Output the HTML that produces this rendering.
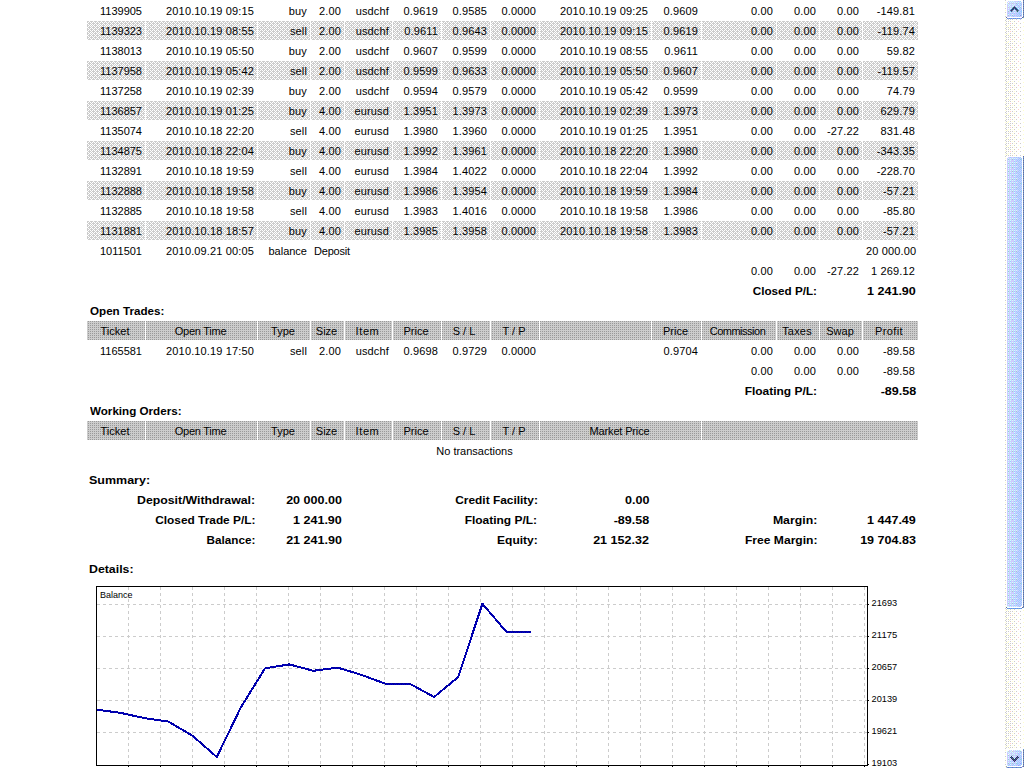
<!DOCTYPE html>
<html lang="en">
<head>
<meta charset="utf-8">
<title>Statement</title>
<style>
html,body{margin:0;padding:0;background:#fff;width:1024px;height:768px;overflow:hidden}
body{position:relative;font-family:"Liberation Sans",Arial,sans-serif;font-size:11px;color:#000}
#bg{position:absolute;left:0;top:0;width:1024px;height:768px}
table{position:absolute;left:86px;top:0;width:833px;border-collapse:separate;border-spacing:1px;table-layout:fixed}
td{padding:4px 3px 2px 3px;height:13px;line-height:13px;font-size:11px;text-align:right;white-space:nowrap;letter-spacing:.15px;overflow:visible;vertical-align:top}
td.l{text-align:left}
td.c,tr.hd td{text-align:center}
td.c{letter-spacing:0}
tr.hd td{letter-spacing:0;padding-right:5px}
td.sp{height:8px;padding:0;line-height:8px;font-size:1px}
td.g{padding:3px 0 0 0;height:auto;line-height:0}
b{font-weight:bold}
b.n{display:inline-block;transform:translateX(1px) scaleX(1.14);transform-origin:100% 50%;letter-spacing:0}
b.w,b.wl{display:inline-block;transform:translateX(1.5px) scaleX(1.095);transform-origin:100% 50%;letter-spacing:0}
b.wl{transform:scaleX(1.057);transform-origin:0 50%}
td.d{letter-spacing:.14px}
td.t{letter-spacing:0}
.chart{display:inline-block;vertical-align:top}
.ct{font-family:"Liberation Sans",Arial,sans-serif;font-size:9.8px;fill:#000}
</style>
</head>
<body>
<svg id="bg" width="1024" height="768" viewBox="0 0 1024 768" shape-rendering="crispEdges">
<defs>
<pattern id="e0" width="8" height="8" patternUnits="userSpaceOnUse"><rect width="8" height="8" fill="#fff"/><path d="M1 0h1v1h-1zM3 0h1v1h-1zM5 0h1v1h-1zM7 0h1v1h-1zM0 1h1v1h-1zM2 1h1v1h-1zM4 1h1v1h-1zM6 1h2v1h-2zM1 2h1v1h-1zM3 2h1v1h-1zM5 2h1v1h-1zM7 2h1v1h-1zM0 3h3v1h-3zM4 3h3v1h-3zM1 4h1v1h-1zM3 4h1v1h-1zM5 4h1v1h-1zM7 4h1v1h-1zM0 5h1v1h-1zM2 5h3v1h-3zM6 5h2v1h-2zM1 6h1v1h-1zM3 6h1v1h-1zM5 6h1v1h-1zM7 6h1v1h-1zM0 7h3v1h-3zM4 7h3v1h-3z" fill="#ccc"/></pattern>
<pattern id="c0" width="2" height="2" patternUnits="userSpaceOnUse"><rect width="2" height="2" fill="#ccc"/><rect x="0" y="1" width="1" height="1" fill="#999"/></pattern>
<pattern id="trk" x="1005" y="0" width="19" height="8" patternUnits="userSpaceOnUse"><rect width="19" height="8" fill="#fff"/><path fill="#ccc" d="M0 0h1v1h-1zM1 1h1v1h-1zM5 1h1v1h-1zM9 1h1v1h-1zM1 3h1v1h-1zM3 3h1v1h-1zM5 3h1v1h-1zM7 3h1v1h-1zM11 3h1v1h-1zM15 3h1v1h-1zM0 4h1v1h-1zM1 5h1v1h-1zM3 5h1v1h-1zM5 5h1v1h-1zM9 5h1v1h-1zM1 7h1v1h-1zM3 7h1v1h-1zM7 7h1v1h-1zM11 7h1v1h-1zM15 7h1v1h-1z"/><path fill="#ffc" d="M3 1h1v1h-1zM7 1h1v1h-1zM13 1h1v1h-1zM0 2h1v1h-1zM2 2h1v1h-1zM18 2h1v1h-1zM9 3h1v1h-1zM4 4h1v1h-1zM7 5h1v1h-1zM0 6h1v1h-1zM18 6h1v1h-1zM9 7h1v1h-1z"/><path fill="#fcc" d="M13 5h1v1h-1zM5 7h1v1h-1z"/></pattern><pattern id="thm" x="1005" y="0" width="19" height="8" patternUnits="userSpaceOnUse"><rect width="19" height="8" fill="#ccf"/><path fill="#ccc" d="M0 0h1v1h-1zM0 4h1v1h-1z"/><path fill="#fff" d="M1 0h1v1h-1zM17 0h1v1h-1zM0 1h2v1h-2zM17 1h1v1h-1zM1 2h1v1h-1zM17 2h1v1h-1zM0 3h2v1h-2zM17 3h1v1h-1zM1 4h1v1h-1zM17 4h1v1h-1zM0 5h2v1h-2zM17 5h1v1h-1zM1 6h1v1h-1zM17 6h1v1h-1zM0 7h2v1h-2zM17 7h1v1h-1z"/><path fill="#cff" d="M3 0h1v1h-1zM5 0h1v1h-1zM9 0h1v1h-1zM3 2h1v1h-1zM5 2h1v1h-1zM7 2h1v1h-1zM9 2h1v1h-1zM11 2h1v1h-1zM3 4h1v1h-1zM5 4h1v1h-1zM7 4h1v1h-1zM9 4h1v1h-1zM3 6h1v1h-1zM5 6h1v1h-1zM7 6h1v1h-1zM9 6h1v1h-1zM11 6h1v1h-1z"/><path fill="#9cf" d="M12 0h1v1h-1zM14 0h1v1h-1zM16 0h1v1h-1zM9 1h1v1h-1zM11 1h1v1h-1zM13 1h1v1h-1zM15 1h1v1h-1zM14 2h1v1h-1zM16 2h1v1h-1zM9 3h1v1h-1zM13 3h1v1h-1zM15 3h1v1h-1zM12 4h1v1h-1zM14 4h1v1h-1zM16 4h1v1h-1zM5 5h1v1h-1zM9 5h1v1h-1zM11 5h1v1h-1zM13 5h1v1h-1zM15 5h1v1h-1zM14 6h1v1h-1zM16 6h1v1h-1zM9 7h1v1h-1zM11 7h1v1h-1zM13 7h1v1h-1zM16 7h1v1h-1z"/><path fill="#669" d="M18 0h1v1h-1zM18 2h1v1h-1zM18 4h1v1h-1zM18 6h1v1h-1z"/><path fill="#69c" d="M18 1h1v1h-1zM18 3h1v1h-1zM18 5h1v1h-1zM18 7h1v1h-1z"/><path fill="#ffc" d="M0 2h1v1h-1zM0 6h1v1h-1z"/><path fill="#9cc" d="M3 3h1v1h-1zM7 3h1v1h-1zM11 3h1v1h-1zM3 7h1v1h-1zM7 7h1v1h-1zM15 7h1v1h-1z"/></pattern>
</defs>
<rect x="87" y="21" width="58" height="19" fill="url(#e0)"/>
<rect x="146" y="21" width="111" height="19" fill="url(#e0)"/>
<rect x="258" y="21" width="52" height="19" fill="url(#e0)"/>
<rect x="311" y="21" width="33" height="19" fill="url(#e0)"/>
<rect x="345" y="21" width="47" height="19" fill="url(#e0)"/>
<rect x="393" y="21" width="48" height="19" fill="url(#e0)"/>
<rect x="442" y="21" width="48" height="19" fill="url(#e0)"/>
<rect x="491" y="21" width="48" height="19" fill="url(#e0)"/>
<rect x="540" y="21" width="111" height="19" fill="url(#e0)"/>
<rect x="652" y="21" width="49" height="19" fill="url(#e0)"/>
<rect x="702" y="21" width="74" height="19" fill="url(#e0)"/>
<rect x="777" y="21" width="42" height="19" fill="url(#e0)"/>
<rect x="820" y="21" width="42" height="19" fill="url(#e0)"/>
<rect x="863" y="21" width="55" height="19" fill="url(#e0)"/>
<rect x="87" y="61" width="58" height="19" fill="url(#e0)"/>
<rect x="146" y="61" width="111" height="19" fill="url(#e0)"/>
<rect x="258" y="61" width="52" height="19" fill="url(#e0)"/>
<rect x="311" y="61" width="33" height="19" fill="url(#e0)"/>
<rect x="345" y="61" width="47" height="19" fill="url(#e0)"/>
<rect x="393" y="61" width="48" height="19" fill="url(#e0)"/>
<rect x="442" y="61" width="48" height="19" fill="url(#e0)"/>
<rect x="491" y="61" width="48" height="19" fill="url(#e0)"/>
<rect x="540" y="61" width="111" height="19" fill="url(#e0)"/>
<rect x="652" y="61" width="49" height="19" fill="url(#e0)"/>
<rect x="702" y="61" width="74" height="19" fill="url(#e0)"/>
<rect x="777" y="61" width="42" height="19" fill="url(#e0)"/>
<rect x="820" y="61" width="42" height="19" fill="url(#e0)"/>
<rect x="863" y="61" width="55" height="19" fill="url(#e0)"/>
<rect x="87" y="101" width="58" height="19" fill="url(#e0)"/>
<rect x="146" y="101" width="111" height="19" fill="url(#e0)"/>
<rect x="258" y="101" width="52" height="19" fill="url(#e0)"/>
<rect x="311" y="101" width="33" height="19" fill="url(#e0)"/>
<rect x="345" y="101" width="47" height="19" fill="url(#e0)"/>
<rect x="393" y="101" width="48" height="19" fill="url(#e0)"/>
<rect x="442" y="101" width="48" height="19" fill="url(#e0)"/>
<rect x="491" y="101" width="48" height="19" fill="url(#e0)"/>
<rect x="540" y="101" width="111" height="19" fill="url(#e0)"/>
<rect x="652" y="101" width="49" height="19" fill="url(#e0)"/>
<rect x="702" y="101" width="74" height="19" fill="url(#e0)"/>
<rect x="777" y="101" width="42" height="19" fill="url(#e0)"/>
<rect x="820" y="101" width="42" height="19" fill="url(#e0)"/>
<rect x="863" y="101" width="55" height="19" fill="url(#e0)"/>
<rect x="87" y="141" width="58" height="19" fill="url(#e0)"/>
<rect x="146" y="141" width="111" height="19" fill="url(#e0)"/>
<rect x="258" y="141" width="52" height="19" fill="url(#e0)"/>
<rect x="311" y="141" width="33" height="19" fill="url(#e0)"/>
<rect x="345" y="141" width="47" height="19" fill="url(#e0)"/>
<rect x="393" y="141" width="48" height="19" fill="url(#e0)"/>
<rect x="442" y="141" width="48" height="19" fill="url(#e0)"/>
<rect x="491" y="141" width="48" height="19" fill="url(#e0)"/>
<rect x="540" y="141" width="111" height="19" fill="url(#e0)"/>
<rect x="652" y="141" width="49" height="19" fill="url(#e0)"/>
<rect x="702" y="141" width="74" height="19" fill="url(#e0)"/>
<rect x="777" y="141" width="42" height="19" fill="url(#e0)"/>
<rect x="820" y="141" width="42" height="19" fill="url(#e0)"/>
<rect x="863" y="141" width="55" height="19" fill="url(#e0)"/>
<rect x="87" y="181" width="58" height="19" fill="url(#e0)"/>
<rect x="146" y="181" width="111" height="19" fill="url(#e0)"/>
<rect x="258" y="181" width="52" height="19" fill="url(#e0)"/>
<rect x="311" y="181" width="33" height="19" fill="url(#e0)"/>
<rect x="345" y="181" width="47" height="19" fill="url(#e0)"/>
<rect x="393" y="181" width="48" height="19" fill="url(#e0)"/>
<rect x="442" y="181" width="48" height="19" fill="url(#e0)"/>
<rect x="491" y="181" width="48" height="19" fill="url(#e0)"/>
<rect x="540" y="181" width="111" height="19" fill="url(#e0)"/>
<rect x="652" y="181" width="49" height="19" fill="url(#e0)"/>
<rect x="702" y="181" width="74" height="19" fill="url(#e0)"/>
<rect x="777" y="181" width="42" height="19" fill="url(#e0)"/>
<rect x="820" y="181" width="42" height="19" fill="url(#e0)"/>
<rect x="863" y="181" width="55" height="19" fill="url(#e0)"/>
<rect x="87" y="221" width="58" height="19" fill="url(#e0)"/>
<rect x="146" y="221" width="111" height="19" fill="url(#e0)"/>
<rect x="258" y="221" width="52" height="19" fill="url(#e0)"/>
<rect x="311" y="221" width="33" height="19" fill="url(#e0)"/>
<rect x="345" y="221" width="47" height="19" fill="url(#e0)"/>
<rect x="393" y="221" width="48" height="19" fill="url(#e0)"/>
<rect x="442" y="221" width="48" height="19" fill="url(#e0)"/>
<rect x="491" y="221" width="48" height="19" fill="url(#e0)"/>
<rect x="540" y="221" width="111" height="19" fill="url(#e0)"/>
<rect x="652" y="221" width="49" height="19" fill="url(#e0)"/>
<rect x="702" y="221" width="74" height="19" fill="url(#e0)"/>
<rect x="777" y="221" width="42" height="19" fill="url(#e0)"/>
<rect x="820" y="221" width="42" height="19" fill="url(#e0)"/>
<rect x="863" y="221" width="55" height="19" fill="url(#e0)"/>
<rect x="87" y="321" width="58" height="19" fill="url(#c0)"/>
<rect x="146" y="321" width="111" height="19" fill="url(#c0)"/>
<rect x="258" y="321" width="52" height="19" fill="url(#c0)"/>
<rect x="311" y="321" width="33" height="19" fill="url(#c0)"/>
<rect x="345" y="321" width="47" height="19" fill="url(#c0)"/>
<rect x="393" y="321" width="48" height="19" fill="url(#c0)"/>
<rect x="442" y="321" width="48" height="19" fill="url(#c0)"/>
<rect x="491" y="321" width="48" height="19" fill="url(#c0)"/>
<rect x="540" y="321" width="111" height="19" fill="url(#c0)"/>
<rect x="652" y="321" width="49" height="19" fill="url(#c0)"/>
<rect x="702" y="321" width="74" height="19" fill="url(#c0)"/>
<rect x="777" y="321" width="42" height="19" fill="url(#c0)"/>
<rect x="820" y="321" width="42" height="19" fill="url(#c0)"/>
<rect x="863" y="321" width="55" height="19" fill="url(#c0)"/>
<rect x="87" y="421" width="58" height="19" fill="url(#c0)"/>
<rect x="146" y="421" width="111" height="19" fill="url(#c0)"/>
<rect x="258" y="421" width="52" height="19" fill="url(#c0)"/>
<rect x="311" y="421" width="33" height="19" fill="url(#c0)"/>
<rect x="345" y="421" width="47" height="19" fill="url(#c0)"/>
<rect x="393" y="421" width="48" height="19" fill="url(#c0)"/>
<rect x="442" y="421" width="48" height="19" fill="url(#c0)"/>
<rect x="491" y="421" width="48" height="19" fill="url(#c0)"/>
<rect x="540" y="421" width="161" height="19" fill="url(#c0)"/>
<rect x="702" y="421" width="216" height="19" fill="url(#c0)"/>
<g id="scrollbar"><rect x="1005" y="0" width="19" height="768" fill="url(#trk)"/>
<rect x="1005" y="160" width="19" height="440" fill="url(#thm)"/>
<rect x="1005" y="0" width="19" height="19" fill="#ccf"/><path fill="#ccc" d="M1005 0h1v1h-1zM1008 3h1v1h-1zM1012 3h1v1h-1zM1005 4h1v1h-1zM1008 7h1v1h-1zM1005 8h1v1h-1zM1005 12h1v1h-1zM1005 16h1v1h-1z"/><path fill="#fff" d="M1006 0h17v1h-17zM1005 1h3v1h-3zM1021 1h2v1h-2zM1006 2h1v1h-1zM1008 2h1v1h-1zM1022 2h1v1h-1zM1005 3h2v1h-2zM1022 3h1v1h-1zM1006 4h1v1h-1zM1022 4h1v1h-1zM1005 5h2v1h-2zM1022 5h1v1h-1zM1006 6h1v1h-1zM1022 6h1v1h-1zM1005 7h2v1h-2zM1022 7h1v1h-1zM1006 8h1v1h-1zM1022 8h1v1h-1zM1005 9h2v1h-2zM1022 9h1v1h-1zM1006 10h1v1h-1zM1022 10h1v1h-1zM1005 11h2v1h-2zM1022 11h1v1h-1zM1006 12h1v1h-1zM1022 12h1v1h-1zM1005 13h2v1h-2zM1022 13h1v1h-1zM1006 14h1v1h-1zM1022 14h1v1h-1zM1005 15h2v1h-2zM1022 15h1v1h-1zM1006 16h1v1h-1zM1022 16h1v1h-1zM1005 17h1v1h-1zM1007 17h15v1h-15zM1006 18h1v1h-1zM1022 18h1v1h-1z"/><path fill="#669" d="M1023 0h1v1h-1zM1023 2h1v1h-1zM1023 4h1v1h-1zM1014 6h1v1h-1zM1023 6h1v1h-1zM1014 8h1v1h-1zM1023 8h1v1h-1zM1010 10h1v1h-1zM1012 10h1v1h-1zM1016 10h1v1h-1zM1018 10h1v1h-1zM1023 10h1v1h-1zM1023 12h1v1h-1zM1023 14h1v1h-1zM1023 16h1v1h-1zM1006 17h1v1h-1zM1022 17h1v1h-1z"/><path fill="#cff" d="M1009 1h1v1h-1zM1011 1h1v1h-1zM1013 1h1v1h-1zM1010 2h1v1h-1zM1012 2h1v1h-1zM1014 2h1v1h-1zM1016 2h1v1h-1zM1018 2h1v1h-1zM1020 2h1v1h-1zM1007 3h1v1h-1zM1008 4h1v1h-1zM1010 4h1v1h-1zM1012 4h1v1h-1zM1014 4h1v1h-1zM1018 4h1v1h-1zM1009 5h1v1h-1zM1013 5h1v1h-1zM1008 6h1v1h-1zM1010 6h1v1h-1zM1012 6h1v1h-1zM1016 6h1v1h-1zM1020 6h1v1h-1zM1008 8h1v1h-1zM1010 8h1v1h-1zM1018 8h1v1h-1zM1008 10h1v1h-1zM1014 10h1v1h-1zM1010 12h1v1h-1zM1014 12h1v1h-1zM1008 14h1v1h-1zM1012 14h1v1h-1zM1010 16h1v1h-1z"/><path fill="#9cf" d="M1018 1h1v1h-1zM1020 1h1v1h-1zM1018 3h1v1h-1zM1020 3h1v1h-1zM1017 4h1v1h-1zM1021 4h1v1h-1zM1016 5h1v1h-1zM1018 5h1v1h-1zM1020 5h1v1h-1zM1019 6h1v1h-1zM1016 7h1v1h-1zM1018 7h1v1h-1zM1017 8h1v1h-1zM1019 8h1v1h-1zM1021 8h1v1h-1zM1010 9h1v1h-1zM1014 9h1v1h-1zM1018 9h1v1h-1zM1020 9h1v1h-1zM1019 10h1v1h-1zM1021 10h1v1h-1zM1010 11h1v1h-1zM1014 11h1v1h-1zM1018 11h1v1h-1zM1020 11h2v1h-2zM1017 12h1v1h-1zM1019 12h1v1h-1zM1021 12h1v1h-1zM1008 13h1v1h-1zM1010 13h1v1h-1zM1012 13h1v1h-1zM1014 13h1v1h-1zM1016 13h1v1h-1zM1018 13h3v1h-3zM1017 14h1v1h-1zM1019 14h1v1h-1zM1021 14h1v1h-1zM1010 15h1v1h-1zM1014 15h1v1h-1zM1016 15h1v1h-1zM1018 15h1v1h-1zM1021 15h1v1h-1zM1013 16h1v1h-1zM1017 16h1v1h-1zM1019 16h1v1h-1z"/><path fill="#69c" d="M1023 1h1v1h-1zM1023 3h1v1h-1zM1023 5h1v1h-1zM1023 7h1v1h-1zM1023 9h1v1h-1zM1023 11h1v1h-1zM1023 13h1v1h-1zM1023 15h1v1h-1zM1023 17h1v1h-1zM1007 18h1v1h-1zM1009 18h1v1h-1zM1011 18h1v1h-1zM1013 18h1v1h-1zM1015 18h1v1h-1zM1017 18h1v1h-1zM1019 18h1v1h-1zM1021 18h1v1h-1z"/><path fill="#ffc" d="M1005 2h1v1h-1zM1005 6h1v1h-1zM1005 10h1v1h-1zM1005 14h1v1h-1zM1005 18h1v1h-1zM1023 18h1v1h-1z"/><path fill="#9cc" d="M1016 3h1v1h-1zM1012 7h1v1h-1zM1020 7h1v1h-1zM1008 11h1v1h-1zM1012 11h1v1h-1zM1016 11h1v1h-1zM1008 15h1v1h-1zM1012 15h1v1h-1z"/><path fill="#366" d="M1013 7h1v1h-1zM1017 10h1v1h-1zM1017 11h1v1h-1z"/><path fill="#336" d="M1014 7h1v1h-1zM1013 8h1v1h-1zM1015 8h1v1h-1zM1012 9h1v1h-1zM1016 9h1v1h-1zM1011 10h1v1h-1z"/><path fill="#369" d="M1015 7h1v1h-1zM1012 8h1v1h-1zM1016 8h1v1h-1zM1011 9h1v1h-1zM1013 9h1v1h-1zM1015 9h1v1h-1zM1017 9h1v1h-1zM1011 11h1v1h-1z"/><path fill="#99c" d="M1020 15h1v1h-1z"/><path fill="#99f" d="M1008 18h1v1h-1zM1012 18h1v1h-1zM1016 18h1v1h-1zM1020 18h1v1h-1z"/><path fill="#69f" d="M1010 18h1v1h-1zM1014 18h1v1h-1zM1018 18h1v1h-1z"/>
<rect x="1005" y="156" width="19" height="4" fill="#fff"/><path fill="#ccc" d="M1005 156h1v1h-1z"/><path fill="#669" d="M1023 156h1v1h-1zM1023 158h1v1h-1z"/><path fill="#ccf" d="M1008 157h2v1h-2zM1011 157h3v1h-3zM1015 157h1v1h-1zM1017 157h1v1h-1zM1019 157h1v1h-1zM1007 158h1v1h-1zM1009 158h1v1h-1zM1011 158h1v1h-1zM1013 158h1v1h-1zM1015 158h1v1h-1zM1017 158h2v1h-2zM1020 158h1v1h-1zM1007 159h1v1h-1zM1009 159h3v1h-3zM1013 159h1v1h-1zM1015 159h1v1h-1zM1017 159h1v1h-1zM1019 159h1v1h-1z"/><path fill="#9cf" d="M1010 157h1v1h-1zM1014 157h1v1h-1zM1016 157h1v1h-1zM1018 157h1v1h-1zM1020 157h1v1h-1zM1019 158h1v1h-1zM1021 158h1v1h-1zM1014 159h1v1h-1zM1016 159h1v1h-1zM1018 159h1v1h-1zM1021 159h1v1h-1z"/><path fill="#69c" d="M1023 157h1v1h-1zM1023 159h1v1h-1z"/><path fill="#ffc" d="M1005 158h1v1h-1z"/><path fill="#cff" d="M1008 158h1v1h-1zM1010 158h1v1h-1zM1012 158h1v1h-1zM1014 158h1v1h-1zM1016 158h1v1h-1z"/><path fill="#9cc" d="M1008 159h1v1h-1zM1012 159h1v1h-1zM1020 159h1v1h-1z"/>
<rect x="1005" y="600" width="19" height="9" fill="#ccf"/><path fill="#ccc" d="M1005 600h1v1h-1zM1005 604h1v1h-1zM1005 608h1v1h-1z"/><path fill="#fff" d="M1006 600h1v1h-1zM1022 600h1v1h-1zM1005 601h2v1h-2zM1022 601h1v1h-1zM1006 602h1v1h-1zM1022 602h1v1h-1zM1005 603h2v1h-2zM1022 603h1v1h-1zM1006 604h1v1h-1zM1022 604h1v1h-1zM1005 605h2v1h-2zM1022 605h1v1h-1zM1006 606h1v1h-1zM1021 606h2v1h-2zM1005 607h1v1h-1zM1007 607h15v1h-15zM1006 608h1v1h-1zM1022 608h2v1h-2z"/><path fill="#cff" d="M1008 600h1v1h-1zM1010 600h1v1h-1zM1014 600h1v1h-1zM1008 602h1v1h-1zM1010 602h1v1h-1zM1012 602h1v1h-1zM1014 602h1v1h-1zM1016 602h1v1h-1zM1008 604h1v1h-1zM1010 604h1v1h-1zM1012 604h1v1h-1zM1014 604h1v1h-1zM1007 606h2v1h-2zM1010 606h1v1h-1zM1012 606h1v1h-1zM1014 606h1v1h-1zM1016 606h1v1h-1z"/><path fill="#9cf" d="M1017 600h1v1h-1zM1019 600h1v1h-1zM1021 600h1v1h-1zM1014 601h1v1h-1zM1016 601h1v1h-1zM1018 601h1v1h-1zM1020 601h1v1h-1zM1019 602h1v1h-1zM1021 602h1v1h-1zM1014 603h1v1h-1zM1018 603h1v1h-1zM1020 603h1v1h-1zM1017 604h1v1h-1zM1019 604h1v1h-1zM1021 604h1v1h-1zM1010 605h1v1h-1zM1014 605h1v1h-1zM1016 605h1v1h-1zM1018 605h1v1h-1zM1020 605h1v1h-1zM1019 606h1v1h-1z"/><path fill="#669" d="M1023 600h1v1h-1zM1023 602h1v1h-1zM1023 604h1v1h-1zM1023 606h1v1h-1zM1006 607h1v1h-1zM1022 607h1v1h-1z"/><path fill="#69c" d="M1023 601h1v1h-1zM1023 603h1v1h-1zM1023 605h1v1h-1zM1023 607h1v1h-1zM1007 608h1v1h-1zM1009 608h1v1h-1zM1011 608h1v1h-1zM1013 608h1v1h-1zM1015 608h1v1h-1zM1017 608h1v1h-1zM1019 608h1v1h-1zM1021 608h1v1h-1z"/><path fill="#ffc" d="M1005 602h1v1h-1zM1005 606h1v1h-1z"/><path fill="#9cc" d="M1008 603h1v1h-1zM1012 603h1v1h-1zM1016 603h1v1h-1z"/><path fill="#69f" d="M1008 608h1v1h-1zM1010 608h1v1h-1zM1012 608h1v1h-1zM1014 608h1v1h-1zM1016 608h1v1h-1zM1018 608h1v1h-1zM1020 608h1v1h-1z"/>
<rect x="1005" y="749" width="19" height="19" fill="#ccf"/><path fill="#fff" d="M1005 749h18v1h-18zM1006 750h3v1h-3zM1012 750h1v1h-1zM1021 750h2v1h-2zM1005 751h2v1h-2zM1022 751h1v1h-1zM1006 752h1v1h-1zM1022 752h1v1h-1zM1005 753h2v1h-2zM1022 753h1v1h-1zM1006 754h1v1h-1zM1008 754h1v1h-1zM1022 754h1v1h-1zM1005 755h2v1h-2zM1022 755h1v1h-1zM1006 756h1v1h-1zM1022 756h1v1h-1zM1005 757h2v1h-2zM1022 757h1v1h-1zM1006 758h1v1h-1zM1022 758h1v1h-1zM1005 759h2v1h-2zM1022 759h1v1h-1zM1006 760h1v1h-1zM1022 760h1v1h-1zM1005 761h2v1h-2zM1022 761h1v1h-1zM1006 762h1v1h-1zM1022 762h1v1h-1zM1005 763h2v1h-2zM1022 763h1v1h-1zM1006 764h1v1h-1zM1022 764h1v1h-1zM1005 765h2v1h-2zM1021 765h2v1h-2zM1007 766h15v1h-15zM1005 767h1v1h-1zM1022 767h2v1h-2z"/><path fill="#69c" d="M1023 749h1v1h-1zM1023 751h1v1h-1zM1023 753h1v1h-1zM1023 755h1v1h-1zM1023 757h1v1h-1zM1023 759h1v1h-1zM1023 761h1v1h-1zM1023 763h1v1h-1zM1023 765h1v1h-1zM1007 767h1v1h-1zM1009 767h3v1h-3zM1013 767h3v1h-3zM1017 767h3v1h-3zM1021 767h1v1h-1z"/><path fill="#ffc" d="M1005 750h1v1h-1zM1005 754h1v1h-1zM1005 758h1v1h-1zM1005 762h1v1h-1zM1005 766h1v1h-1z"/><path fill="#cff" d="M1010 750h1v1h-1zM1014 750h1v1h-1zM1016 750h1v1h-1zM1018 750h1v1h-1zM1020 750h1v1h-1zM1007 751h1v1h-1zM1011 751h1v1h-1zM1008 752h1v1h-1zM1010 752h1v1h-1zM1012 752h1v1h-1zM1014 752h1v1h-1zM1016 752h1v1h-1zM1018 752h1v1h-1zM1009 753h1v1h-1zM1013 753h1v1h-1zM1010 754h1v1h-1zM1012 754h1v1h-1zM1014 754h1v1h-1zM1016 754h1v1h-1zM1020 754h1v1h-1zM1008 756h1v1h-1zM1010 756h1v1h-1zM1012 756h1v1h-1zM1014 756h1v1h-1zM1008 758h1v1h-1zM1010 758h1v1h-1zM1014 758h1v1h-1zM1008 760h1v1h-1zM1010 760h1v1h-1zM1008 762h1v1h-1zM1010 762h1v1h-1zM1012 762h1v1h-1zM1016 762h1v1h-1zM1010 764h1v1h-1zM1014 764h1v1h-1zM1007 765h1v1h-1z"/><path fill="#669" d="M1023 750h1v1h-1zM1023 752h1v1h-1zM1023 754h1v1h-1zM1023 756h1v1h-1zM1012 758h1v1h-1zM1016 758h1v1h-1zM1023 758h1v1h-1zM1014 760h1v1h-1zM1023 760h1v1h-1zM1023 762h1v1h-1zM1023 764h1v1h-1zM1023 766h1v1h-1z"/><path fill="#ccc" d="M1008 751h1v1h-1zM1012 751h1v1h-1zM1005 752h1v1h-1zM1005 756h1v1h-1zM1005 760h1v1h-1zM1005 764h1v1h-1zM1006 767h1v1h-1z"/><path fill="#9cf" d="M1016 751h1v1h-1zM1018 751h1v1h-1zM1021 752h1v1h-1zM1018 753h1v1h-1zM1020 753h1v1h-1zM1019 754h1v1h-1zM1018 755h1v1h-1zM1020 755h1v1h-1zM1019 756h1v1h-1zM1021 756h1v1h-1zM1014 757h1v1h-1zM1020 757h1v1h-1zM1019 758h1v1h-1zM1021 758h1v1h-1zM1018 759h1v1h-1zM1021 759h1v1h-1zM1017 760h1v1h-1zM1019 760h1v1h-1zM1021 760h1v1h-1zM1010 761h1v1h-1zM1012 761h1v1h-1zM1016 761h1v1h-1zM1018 761h1v1h-1zM1020 761h1v1h-1zM1017 762h1v1h-1zM1019 762h1v1h-1zM1021 762h1v1h-1zM1010 763h1v1h-1zM1014 763h1v1h-1zM1017 763h2v1h-2zM1021 763h1v1h-1zM1009 764h1v1h-1zM1013 764h1v1h-1zM1017 764h1v1h-1zM1019 764h1v1h-1zM1021 764h1v1h-1zM1008 765h1v1h-1zM1010 765h1v1h-1zM1012 765h1v1h-1zM1014 765h1v1h-1zM1016 765h1v1h-1zM1019 765h2v1h-2z"/><path fill="#9cc" d="M1020 751h1v1h-1zM1008 755h1v1h-1zM1012 755h1v1h-1zM1016 755h1v1h-1zM1008 759h1v1h-1zM1020 759h1v1h-1zM1008 763h1v1h-1zM1012 763h1v1h-1zM1016 763h1v1h-1z"/><path fill="#336" d="M1011 756h1v1h-1zM1017 756h1v1h-1zM1010 757h1v1h-1zM1012 757h1v1h-1zM1016 757h1v1h-1zM1018 757h1v1h-1zM1011 758h1v1h-1zM1015 758h1v1h-1zM1012 759h1v1h-1zM1014 759h1v1h-1zM1016 759h1v1h-1zM1013 760h1v1h-1zM1015 760h1v1h-1zM1014 761h1v1h-1z"/><path fill="#369" d="M1011 757h1v1h-1zM1017 757h1v1h-1zM1015 759h1v1h-1z"/><path fill="#366" d="M1013 758h1v1h-1zM1017 758h1v1h-1zM1013 759h1v1h-1z"/><path fill="#99f" d="M1020 763h1v1h-1zM1018 765h1v1h-1z"/><path fill="#99c" d="M1006 766h1v1h-1zM1022 766h1v1h-1z"/><path fill="#66c" d="M1008 767h1v1h-1zM1012 767h1v1h-1zM1016 767h1v1h-1zM1020 767h1v1h-1z"/></g>
</svg>
<table cellspacing="1" cellpadding="3">
<colgroup><col style="width:58px"><col style="width:111px"><col style="width:52px"><col style="width:33px"><col style="width:47px"><col style="width:48px"><col style="width:48px"><col style="width:48px"><col style="width:111px"><col style="width:49px"><col style="width:74px"><col style="width:42px"><col style="width:42px"><col style="width:55px"></colgroup>
<tr><td class="t">1139905</td><td class="d">2010.10.19 09:15</td><td>buy</td><td>2.00</td><td>usdchf</td><td>0.9619</td><td>0.9585</td><td>0.0000</td><td class="d">2010.10.19 09:25</td><td>0.9609</td><td>0.00</td><td>0.00</td><td>0.00</td><td>-149.81</td></tr>
<tr class="sh"><td class="t">1139323</td><td class="d">2010.10.19 08:55</td><td>sell</td><td>2.00</td><td>usdchf</td><td>0.9611</td><td>0.9643</td><td>0.0000</td><td class="d">2010.10.19 09:15</td><td>0.9619</td><td>0.00</td><td>0.00</td><td>0.00</td><td>-119.74</td></tr>
<tr><td class="t">1138013</td><td class="d">2010.10.19 05:50</td><td>buy</td><td>2.00</td><td>usdchf</td><td>0.9607</td><td>0.9599</td><td>0.0000</td><td class="d">2010.10.19 08:55</td><td>0.9611</td><td>0.00</td><td>0.00</td><td>0.00</td><td>59.82</td></tr>
<tr class="sh"><td class="t">1137958</td><td class="d">2010.10.19 05:42</td><td>sell</td><td>2.00</td><td>usdchf</td><td>0.9599</td><td>0.9633</td><td>0.0000</td><td class="d">2010.10.19 05:50</td><td>0.9607</td><td>0.00</td><td>0.00</td><td>0.00</td><td>-119.57</td></tr>
<tr><td class="t">1137258</td><td class="d">2010.10.19 02:39</td><td>buy</td><td>2.00</td><td>usdchf</td><td>0.9594</td><td>0.9579</td><td>0.0000</td><td class="d">2010.10.19 05:42</td><td>0.9599</td><td>0.00</td><td>0.00</td><td>0.00</td><td>74.79</td></tr>
<tr class="sh"><td class="t">1136857</td><td class="d">2010.10.19 01:25</td><td>buy</td><td>4.00</td><td>eurusd</td><td>1.3951</td><td>1.3973</td><td>0.0000</td><td class="d">2010.10.19 02:39</td><td>1.3973</td><td>0.00</td><td>0.00</td><td>0.00</td><td>629.79</td></tr>
<tr><td class="t">1135074</td><td class="d">2010.10.18 22:20</td><td>sell</td><td>4.00</td><td>eurusd</td><td>1.3980</td><td>1.3960</td><td>0.0000</td><td class="d">2010.10.19 01:25</td><td>1.3951</td><td>0.00</td><td>0.00</td><td>-27.22</td><td>831.48</td></tr>
<tr class="sh"><td class="t">1134875</td><td class="d">2010.10.18 22:04</td><td>buy</td><td>4.00</td><td>eurusd</td><td>1.3992</td><td>1.3961</td><td>0.0000</td><td class="d">2010.10.18 22:20</td><td>1.3980</td><td>0.00</td><td>0.00</td><td>0.00</td><td>-343.35</td></tr>
<tr><td class="t">1132891</td><td class="d">2010.10.18 19:59</td><td>sell</td><td>4.00</td><td>eurusd</td><td>1.3984</td><td>1.4022</td><td>0.0000</td><td class="d">2010.10.18 22:04</td><td>1.3992</td><td>0.00</td><td>0.00</td><td>0.00</td><td>-228.70</td></tr>
<tr class="sh"><td class="t">1132888</td><td class="d">2010.10.18 19:58</td><td>buy</td><td>4.00</td><td>eurusd</td><td>1.3986</td><td>1.3954</td><td>0.0000</td><td class="d">2010.10.18 19:59</td><td>1.3984</td><td>0.00</td><td>0.00</td><td>0.00</td><td>-57.21</td></tr>
<tr><td class="t">1132885</td><td class="d">2010.10.18 19:58</td><td>sell</td><td>4.00</td><td>eurusd</td><td>1.3983</td><td>1.4016</td><td>0.0000</td><td class="d">2010.10.18 19:58</td><td>1.3986</td><td>0.00</td><td>0.00</td><td>0.00</td><td>-85.80</td></tr>
<tr class="sh"><td class="t">1131881</td><td class="d">2010.10.18 18:57</td><td>buy</td><td>4.00</td><td>eurusd</td><td>1.3985</td><td>1.3958</td><td>0.0000</td><td class="d">2010.10.18 19:58</td><td>1.3983</td><td>0.00</td><td>0.00</td><td>0.00</td><td>-57.21</td></tr>
<tr><td class="t">1011501</td><td class="d">2010.09.21 00:05</td><td style="letter-spacing:0">balance</td><td colspan="10" class="l" style="letter-spacing:-.2px">Deposit</td><td>20 000.00</td></tr>
<tr><td colspan="10">&nbsp;</td><td>0.00</td><td>0.00</td><td>-27.22</td><td>1 269.12</td></tr>
<tr><td colspan="12"><b class="w" style="transform:translateX(1.5px) scaleX(1.062)">Closed P/L:</b></td><td colspan="2"><b class="n">1 241.90</b></td></tr>
<tr><td colspan="14" class="l"><b class="wl">Open Trades:</b></td></tr>
<tr class="hd"><td>Ticket</td><td style="letter-spacing:-0.25px;">Open Time</td><td>Type</td><td>Size</td><td style="letter-spacing:0.6px;">Item</td><td>Price</td><td style="padding-right:7px;">S / L</td><td>T / P</td><td>&nbsp;</td><td>Price</td><td style="letter-spacing:-0.5px;padding-right:6px;">Commission</td><td style="letter-spacing:0.2px;">Taxes</td><td>Swap</td><td style="letter-spacing:0.35px;padding-right:6px;">Profit</td></tr>
<tr><td class="t">1165581</td><td class="d">2010.10.19 17:50</td><td>sell</td><td>2.00</td><td>usdchf</td><td>0.9698</td><td>0.9729</td><td>0.0000</td><td>&nbsp;</td><td>0.9704</td><td>0.00</td><td>0.00</td><td>0.00</td><td>-89.58</td></tr>
<tr><td colspan="10">&nbsp;</td><td>0.00</td><td>0.00</td><td>0.00</td><td>-89.58</td></tr>
<tr><td colspan="12"><b class="w" style="transform:translateX(1.5px) scaleX(1.088)">Floating P/L:</b></td><td colspan="2"><b class="n">-89.58</b></td></tr>
<tr><td colspan="14" class="l"><b class="wl">Working Orders:</b></td></tr>
<tr class="hd"><td>Ticket</td><td style="letter-spacing:-0.25px;">Open Time</td><td>Type</td><td>Size</td><td style="letter-spacing:0.6px;">Item</td><td>Price</td><td style="padding-right:7px;">S / L</td><td>T / P</td><td colspan="2" style="letter-spacing:-0.15px;">Market Price</td><td colspan="4">&nbsp;</td></tr>
<tr><td colspan="13" class="c">No transactions</td><td>&nbsp;</td></tr>
<tr><td colspan="14" class="sp"></td></tr>
<tr><td colspan="14" class="l"><b class="wl" style="transform:translateX(-1px) scaleX(1.135)">Summary:</b></td></tr>
<tr><td colspan="2"><b class="w" style="transform:translateX(1.5px) scaleX(1.118)">Deposit/Withdrawal:</b></td><td colspan="2"><b class="n">20 000.00</b></td><td colspan="4"><b class="w" style="transform:translateX(1.5px) scaleX(1.082)">Credit Facility:</b></td><td><b class="n">0.00</b></td><td colspan="3"><b class="w">&nbsp;</b></td><td colspan="2"><b class="n">&nbsp;</b></td></tr>
<tr><td colspan="2"><b class="w" style="transform:translateX(1.5px) scaleX(1.078)">Closed Trade P/L:</b></td><td colspan="2"><b class="n">1 241.90</b></td><td colspan="4"><b class="w" style="transform:translateX(1.5px) scaleX(1.088)">Floating P/L:</b></td><td><b class="n">-89.58</b></td><td colspan="3"><b class="w" style="transform:translateX(1.5px) scaleX(1.116)">Margin:</b></td><td colspan="2"><b class="n">1 447.49</b></td></tr>
<tr><td colspan="2"><b class="w" style="transform:translateX(1.5px) scaleX(1.063)">Balance:</b></td><td colspan="2"><b class="n">21 241.90</b></td><td colspan="4"><b class="w" style="transform:translateX(1.5px) scaleX(1.092)">Equity:</b></td><td><b class="n">21 152.32</b></td><td colspan="3"><b class="w" style="transform:translateX(1.5px) scaleX(1.1)">Free Margin:</b></td><td colspan="2"><b class="n">19 704.83</b></td></tr>
<tr><td colspan="14" class="sp"></td></tr>
<tr><td colspan="14" class="l"><b class="wl" style="transform:translateX(-1px) scaleX(1.12)">Details:</b></td></tr>
<tr><td colspan="14" class="c g"><svg class="chart" width="820" height="200" viewBox="0 0 820 200" shape-rendering="crispEdges">
<defs><pattern id="nv" x="3" y="2" width="8" height="8" patternUnits="userSpaceOnUse"><rect width="8" height="8" fill="#009"/><path d="M0 0h1v1h-1zM2 0h1v1h-1zM4 0h1v1h-1zM6 0h1v1h-1zM1 1h1v1h-1zM3 1h1v1h-1zM5 1h1v1h-1zM0 2h1v1h-1zM2 2h1v1h-1zM4 2h1v1h-1zM6 2h1v1h-1zM3 3h1v1h-1zM7 3h1v1h-1zM0 4h1v1h-1zM2 4h1v1h-1zM4 4h1v1h-1zM6 4h1v1h-1zM1 5h1v1h-1zM5 5h1v1h-1zM0 6h1v1h-1zM2 6h1v1h-1zM4 6h1v1h-1zM6 6h1v1h-1zM3 7h1v1h-1zM7 7h1v1h-1z" fill="#00c"/></pattern></defs>
<rect x="0" y="0" width="820" height="200" fill="#fff"/>
<path d="M35.5 5V183M67.5 5V183M99.5 5V183M131.5 5V183M163.5 5V183M195.5 5V183M227.5 5V183M259.5 5V183M291.5 5V183M323.5 5V183M355.5 5V183M387.5 5V183M419.5 5V183M451.5 5V183M483.5 5V183M515.5 5V183M547.5 5V183M579.5 5V183M611.5 5V183M643.5 5V183M675.5 5V183M707.5 5V183M739.5 5V183M771.5 5V183" stroke="#ccc" stroke-width="1" stroke-dasharray="3 3" fill="none"/>
<path d="M4 22.5H774M4 54.5H774M4 86.5H774M4 118.5H774M4 150.5H774" stroke="#ccc" stroke-width="1" stroke-dasharray="3 3" fill="none"/>
<rect x="3.5" y="4.5" width="771" height="179" fill="none" stroke="#000" stroke-width="1"/>
<path d="M775 22.5h1M775 54.5h1M775 86.5h1M775 118.5h1M775 150.5h1M775 182.5h1M35.5 184v1M67.5 184v1M99.5 184v1M131.5 184v1M163.5 184v1M195.5 184v1M227.5 184v1M259.5 184v1M291.5 184v1M323.5 184v1M355.5 184v1M387.5 184v1M419.5 184v1M451.5 184v1M483.5 184v1M515.5 184v1M547.5 184v1M579.5 184v1M611.5 184v1M643.5 184v1M675.5 184v1M707.5 184v1M739.5 184v1M771.5 184v1" stroke="#000" stroke-width="1" fill="none"/>
<polyline points="4.0,127.7 27.2,130.8 51.3,136.1 75.4,139.6 99.6,153.8 123.8,175.0 147.9,125.3 172.0,86.4 196.2,82.4 220.4,88.8 244.5,85.6 268.6,92.9 292.8,101.9 316.9,101.8 341.1,115.0 365.2,95.0 389.4,21.7 413.5,50.0 437.7,50.0" fill="none" stroke="url(#nv)" stroke-width="2" stroke-linejoin="round" shape-rendering="crispEdges"/>
<text x="7" y="16" class="ct" textLength="32.5" lengthAdjust="spacingAndGlyphs">Balance</text>
<text x="778.6" y="24" class="ct" textLength="25.6" lengthAdjust="spacingAndGlyphs">21693</text>
<text x="778.6" y="56" class="ct" textLength="25.6" lengthAdjust="spacingAndGlyphs">21175</text>
<text x="778.6" y="88" class="ct" textLength="25.6" lengthAdjust="spacingAndGlyphs">20657</text>
<text x="778.6" y="120" class="ct" textLength="25.6" lengthAdjust="spacingAndGlyphs">20139</text>
<text x="778.6" y="152" class="ct" textLength="25.6" lengthAdjust="spacingAndGlyphs">19621</text>
<text x="778.6" y="184" class="ct" textLength="25.6" lengthAdjust="spacingAndGlyphs">19103</text>
</svg></td></tr>
</table>

</body>
</html>
